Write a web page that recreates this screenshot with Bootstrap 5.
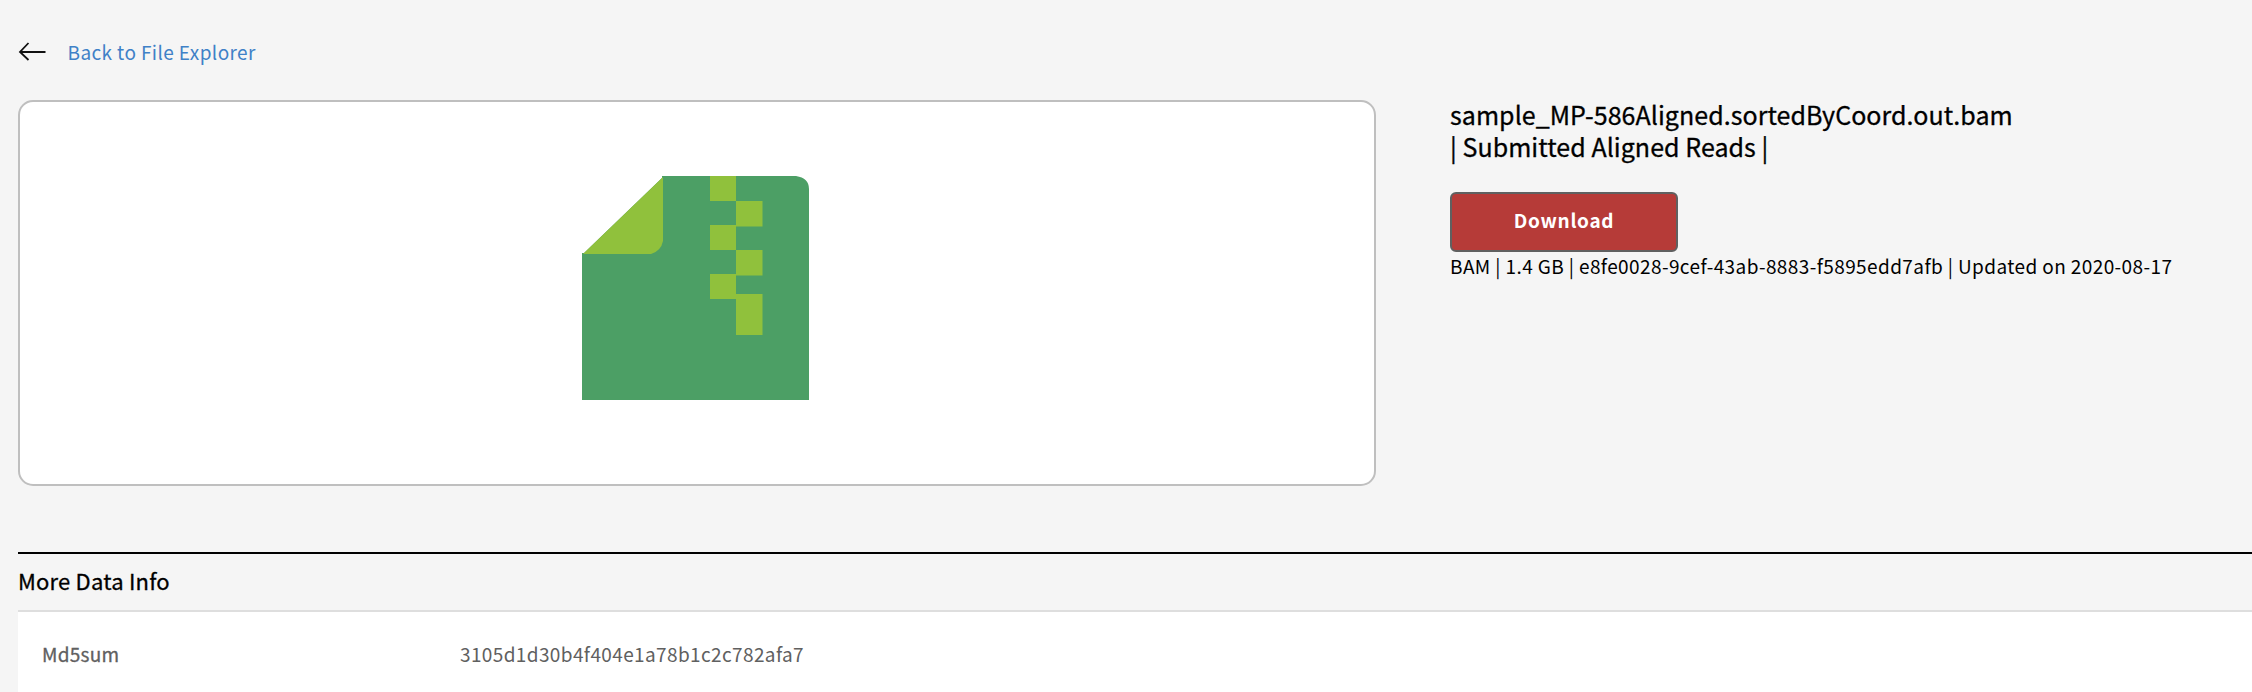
<!DOCTYPE html>
<html lang="en">
<head>
<meta charset="utf-8">
<meta name="viewport" content="width=device-width, initial-scale=1">
<title>File details</title>
<link rel="stylesheet" href="https://cdn.jsdelivr.net/npm/bootstrap@5.3.0/dist/css/bootstrap.min.css">
<style>
body { background: #f5f5f5; color: #000; font-family: "Noto Sans CJK SC", "Noto Sans", sans-serif; font-size: 19px; line-height: 32px; overflow: hidden; }
.page { padding: 36px 0 0 18px; }
.back-link { height: 32px; gap: 21.5px; }
.back-link a { color: #3f81c7; letter-spacing: .4px; }
.file-area { margin-top: 32px; gap: 74px; }
.preview { width: 1358px; height: 386px; border: 2px solid #bfbfbf; border-radius: 15px; }
.file-icon { margin-top: 74px; margin-right: 3px; }
.details { margin-top: -2px; }
.file-title { font-size: 25px; line-height: 32px; margin-bottom: 30px; letter-spacing: .05px; -webkit-text-stroke: .3px #000; }
.btn-download { width: 228px; height: 60px; background: #b63b38; border: 2px solid #606060; border-radius: 6px; color: #fff; font-size: 19px; line-height: 28px; font-weight: 700; letter-spacing: .7px; padding: 0 0 4px; }
.btn-download:hover { background: #a33330; color: #fff; }
.file-meta { letter-spacing: .4px; line-height: 28px; }
.more-info { margin-top: 66px; border-top: 2px solid #000; }
.more-info h2 { font-size: 22px; line-height: 53px; height: 56px; letter-spacing: .2px; -webkit-text-stroke: .3px #000; }
.info-row { height: 85px; border-top: 2px solid #dedede; padding-left: 24px; color: #606060; }
.info-key { width: 418px; letter-spacing: .25px; -webkit-text-stroke: .3px #606060; }
.info-value { letter-spacing: .38px; }
.page { background: linear-gradient(#fff, #fff) 18px 100% / 100% 80px no-repeat; min-height: 692px; }
</style>
</head>
<body>
<main class="page">
  <nav class="back-link d-flex align-items-center">
    <svg width="28" height="20" viewBox="0 0 28 20" fill="none" stroke="#111" stroke-width="1.800"><path d="M27.500 10H2M10.500 1L2 10l8.500 8"/></svg>
    <a href="#" class="text-decoration-none">Back to File Explorer</a>
  </nav>
  <section class="file-area d-flex align-items-start">
    <div class="preview bg-white d-flex justify-content-center align-items-start flex-shrink-0">
      <svg class="file-icon" width="227" height="224" viewBox="0 0 227 224">
        <path fill="#4c9f65" d="M80 0H214Q227 2 227 13V224H0V77H2L80 2Z"/>
        <path fill="#90c13c" d="M81 1V65Q79 75 69 78H1Z"/>
        <path fill="#90c13c" d="M128 0h26v25h-26zM154 25h26.500v25.500h-26.500zM128 49h26v25h-26zM154 74h26.500v25.500h-26.500zM128 98h26v25h-26zM154 118h26.500v41h-26.500z"/>
      </svg>
    </div>
    <div class="details">
      <h1 class="file-title fw-normal">sample_MP-586Aligned.sortedByCoord.out.bam<br>| Submitted Aligned Reads |</h1>
      <button type="button" class="btn btn-download d-block">Download</button>
      <div class="file-meta">BAM | 1.4 GB | e8fe0028-9cef-43ab-8883-f5895edd7afb | Updated on 2020-08-17</div>
    </div>
  </section>
  <section class="more-info">
    <h2 class="fw-normal m-0">More Data Info</h2>
    <div class="info-row bg-white d-flex align-items-center">
      <div class="info-key">Md5sum</div>
      <div class="info-value">3105d1d30b4f404e1a78b1c2c782afa7</div>
    </div>
  </section>
</main>
<script src="https://cdn.jsdelivr.net/npm/bootstrap@5.3.0/dist/js/bootstrap.bundle.min.js"></script>
</body>
</html>
